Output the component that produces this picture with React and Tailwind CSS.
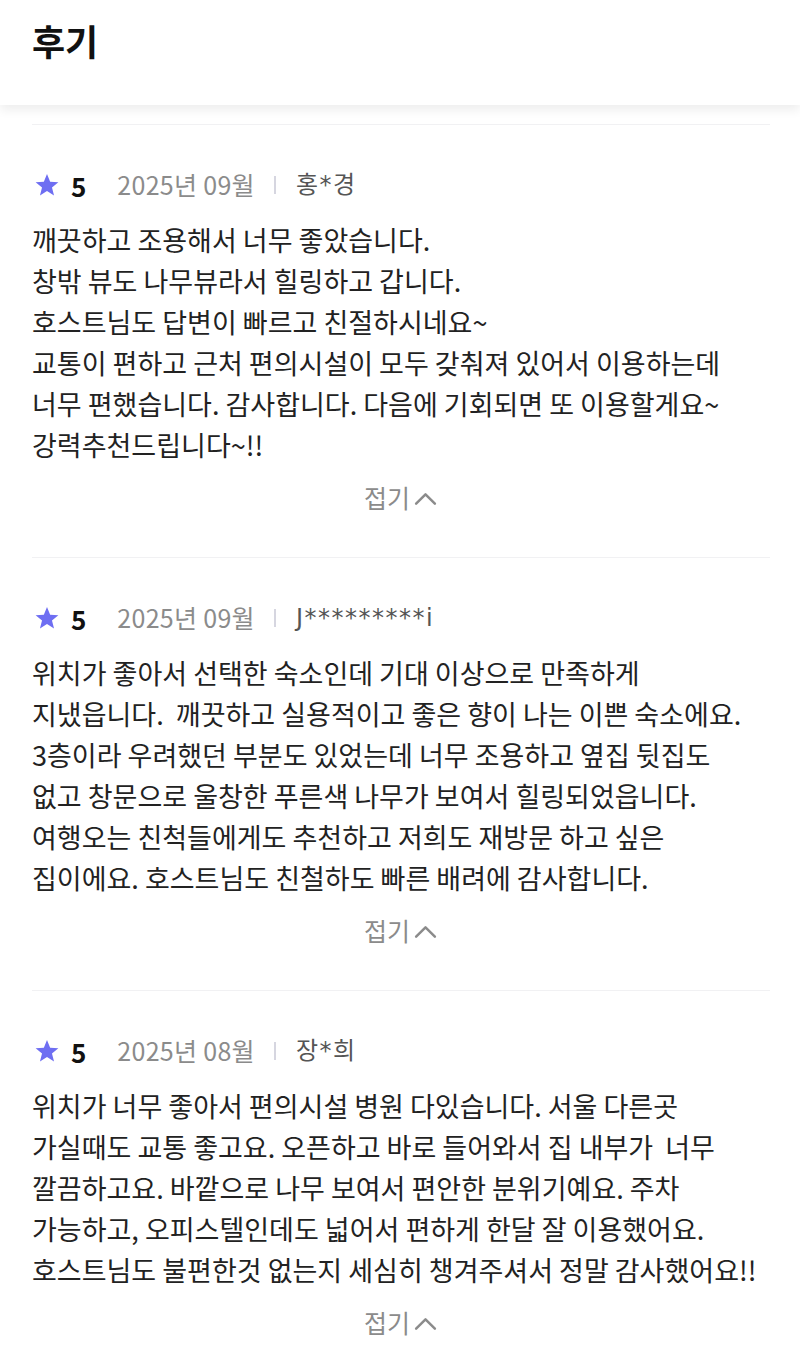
import React from 'react';

const reviews = [
  {
    date: '2025년 09월',
    name: '홍*경',
    lines: [
      '깨끗하고 조용해서 너무 좋았습니다.',
      '창밖 뷰도 나무뷰라서 힐링하고 갑니다.',
      '호스트님도 답변이 빠르고 친절하시네요~',
      '교통이 편하고 근처 편의시설이 모두 갖춰져 있어서 이용하는데',
      '너무 편했습니다. 감사합니다. 다음에 기회되면 또 이용할게요~',
      '강력추천드립니다~!!',
    ],
  },
  {
    date: '2025년 09월',
    name: 'J*********i',
    lines: [
      '위치가 좋아서 선택한 숙소인데 기대 이상으로 만족하게',
      '지냈읍니다.  깨끗하고 실용적이고 좋은 향이 나는 이쁜 숙소에요.',
      '3층이라 우려했던 부분도 있었는데 너무 조용하고 옆집 뒷집도',
      '없고 창문으로 울창한 푸른색 나무가 보여서 힐링되었읍니다.',
      '여행오는 친척들에게도 추천하고 저희도 재방문 하고 싶은',
      '집이에요. 호스트님도 친철하도 빠른 배려에 감사합니다.',
    ],
  },
  {
    date: '2025년 08월',
    name: '장*희',
    lines: [
      '위치가 너무 좋아서 편의시설 병원 다있습니다. 서울 다른곳',
      '가실때도 교통 좋고요. 오픈하고 바로 들어와서 집 내부가  너무',
      '깔끔하고요. 바깥으로 나무 보여서 편안한 분위기예요. 주차',
      '가능하고, 오피스텔인데도 넓어서 편하게 한달 잘 이용했어요.',
      '호스트님도 불편한것 없는지 세심히 챙겨주셔서 정말 감사했어요!!',
    ],
  },
];

function Star() {
  return (
    <svg className="ml-[2px] w-[26px] h-[26px]" viewBox="0 0 24 24" fill="#6e6ef2">
      <path d="M12 1.8l2.9 7.1 7.6.5-5.9 4.9 1.9 7.4L12 17.6l-6.5 4.1 1.9-7.4-5.9-4.9 7.6-.5z" />
    </svg>
  );
}

function ReviewItem({ review }) {
  return (
    <div className="border-t border-[#f1f1f3] pt-[45px] pb-[44px]">
      {/* Meta row */}
      <div className="flex items-center h-[30px]">
        <Star />
        <span className="ml-[11px] text-[26px] font-bold text-[#111]">5</span>
        <span className="ml-[31px] text-[25px] text-[#8b8b8b] tracking-[0.3px]">{review.date}</span>
        <span className="ml-[19px] w-[2px] h-[18px] bg-[#d6d6e0]" />
        <span
          className="ml-[20px] text-[24px] text-[#555] tracking-[1.5px]"
          style={{ fontFamily: '"DejaVu Sans", "Noto Sans CJK KR", sans-serif' }}
        >
          {review.name}
        </span>
      </div>

      {/* Body */}
      <div className="mt-[19px] text-[27px] leading-[41px] text-[#222] whitespace-pre">
        {review.lines.map((line, i) => (
          <div key={i}>{line}</div>
        ))}
      </div>

      {/* Collapse */}
      <div className="mt-[18px] flex items-center justify-center h-[30px] text-[#8b8b8b]">
        <span className="text-[25px]">접기</span>
        <svg className="ml-[3px] w-[25px] h-[25px]" viewBox="0 0 24 24" fill="none" stroke="currentColor" strokeWidth={2.4} strokeLinecap="round" strokeLinejoin="round">
          <path d="M3 17L12 8l9 9" />
        </svg>
      </div>
    </div>
  );
}

export default function App() {
  return (
    <div className="w-[800px] min-h-[1350px] bg-white" style={{ fontFamily: '"Noto Sans CJK KR", "Noto Sans", sans-serif' }}>
      {/* Header */}
      <div className="relative z-10 h-[105px] bg-white shadow-[0_5px_10px_rgba(0,0,0,0.07)] px-8 pt-[12px]">
        <h1 className="text-[36px] font-bold text-[#111] leading-[56px]">후기</h1>
      </div>

      <div className="pt-[19px] pl-8 pr-[30px]">
        {reviews.map((r, i) => (
          <ReviewItem key={i} review={r} />
        ))}
      </div>
    </div>
  );
}
